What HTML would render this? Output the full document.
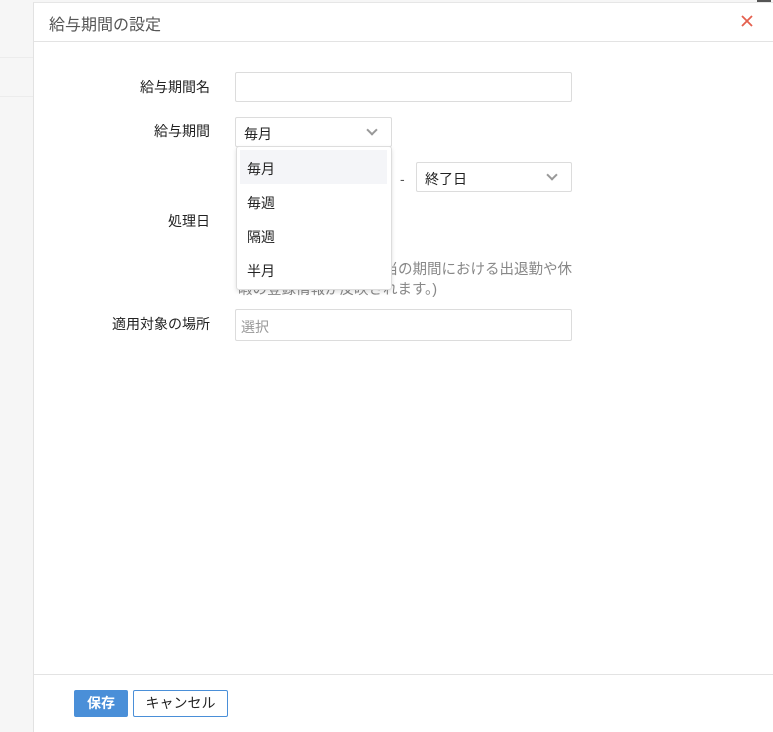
<!DOCTYPE html>
<html><head><meta charset="utf-8">
<style>
*{box-sizing:border-box;margin:0;padding:0}
body{width:773px;height:732px;overflow:hidden;background:#f6f6f6;font-family:"Liberation Sans","Noto Sans CJK JP",sans-serif;font-size:14px;color:#222;position:relative}
.abs{position:absolute}
.modal{left:33px;top:2px;width:740px;height:730px;background:#fff;border-left:1px solid #e2e2e2;border-top:1px solid #e6e6e6}
.lbl{position:absolute;right:563px;font-size:14px;color:#222;text-align:right;white-space:nowrap}
.inp{position:absolute;border:1px solid #dcdcdc;background:#fff;border-radius:2px}
.chev{position:absolute;width:8px;height:8px;border-right:2px solid #999;border-bottom:2px solid #999;transform:rotate(45deg)}
</style></head><body>
<div class="abs" style="left:0;top:57px;width:33px;height:1px;background:#ececec"></div>
<div class="abs" style="left:0;top:96px;width:33px;height:1px;background:#ececec"></div>
<div class="abs" style="left:757px;top:0;width:14px;height:2px;background:#555"></div>
<div class="abs modal"></div>
<div class="abs" style="left:49px;top:11px;font-size:16px;color:#555">給与期間の設定</div>
<svg class="abs" style="left:741px;top:15px" width="12" height="12" viewBox="0 0 12 12"><path d="M1 1L11 11M11 1L1 11" stroke="#e4604e" stroke-width="1.8"/></svg>
<div class="abs" style="left:34px;top:41px;width:739px;height:1px;background:#e3e3e3"></div>

<div class="lbl" style="top:77px">給与期間名</div>
<div class="inp" style="left:235px;top:72px;width:337px;height:30px"></div>

<div class="lbl" style="top:121px">給与期間</div>
<div class="inp" style="left:235px;top:117px;width:157px;height:30px"></div>
<div class="abs" style="left:244px;top:124px">毎月</div>
<div class="chev" style="left:368px;top:126px"></div>

<div class="abs" style="left:400px;top:171px;color:#555">-</div>
<div class="inp" style="left:416px;top:162px;width:156px;height:30px"></div>
<div class="abs" style="left:425px;top:169px">終了日</div>
<div class="chev" style="left:548px;top:171px"></div>

<div class="lbl" style="top:211px">処理日</div>
<div class="abs" style="right:201px;top:258px;color:#888;font-size:14.5px;white-space:nowrap">（該当の期間における出退勤や休</div>
<div class="abs" style="left:238px;top:278px;color:#888;font-size:14.5px;white-space:nowrap">暇の登録情報が反映されます。)</div>

<div class="abs" style="left:236px;top:146px;width:156px;height:144px;background:#fff;border:1px solid #ddd;border-radius:3px;box-shadow:0 2px 4px rgba(0,0,0,.12)"></div>
<div class="abs" style="left:240px;top:150px;width:147px;height:34px;background:#f4f5f8"></div>
<div class="abs" style="left:247px;top:159px">毎月</div>
<div class="abs" style="left:247px;top:193px">毎週</div>
<div class="abs" style="left:247px;top:227px">隔週</div>
<div class="abs" style="left:247px;top:261px">半月</div>

<div class="lbl" style="top:314px">適用対象の場所</div>
<div class="inp" style="left:235px;top:309px;width:337px;height:32px"></div>
<div class="abs" style="left:241px;top:317px;color:#999">選択</div>

<div class="abs" style="left:34px;top:674px;width:739px;height:1px;background:#e3e3e3"></div>
<div class="abs" style="left:74px;top:690px;width:54px;height:27px;background:#4a8fd8;border-radius:2px;color:#fff;font-weight:bold;text-align:center;line-height:27px">保存</div>
<div class="abs" style="left:133px;top:690px;width:95px;height:27px;border:1px solid #4a8fd8;border-radius:2px;text-align:center;line-height:25px;color:#222">キャンセル</div>
</body></html>
